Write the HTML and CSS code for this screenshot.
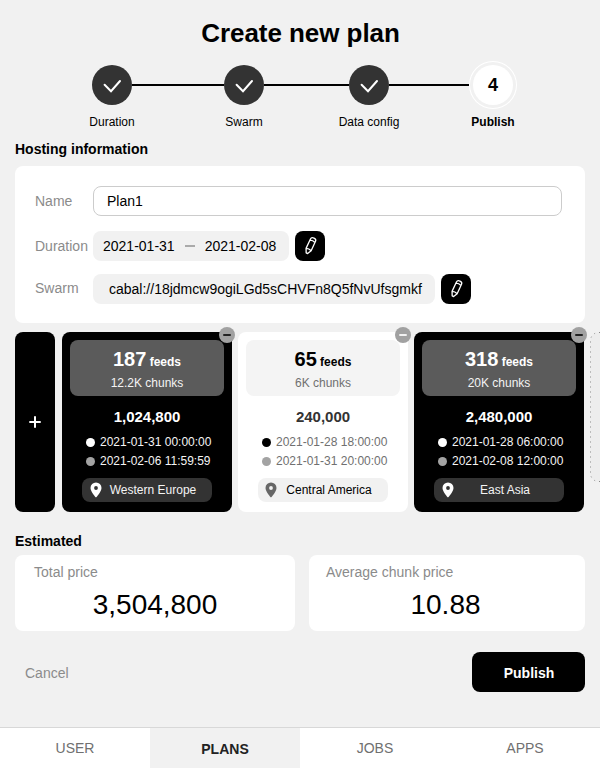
FILE: index.html
```html
<!DOCTYPE html>
<html lang="en">
<head>
<meta charset="utf-8">
<title>Create new plan</title>
<link rel="stylesheet" href="styles.css">
</head>
<body>
<svg width="0" height="0" class="sprite" aria-hidden="true">
  <symbol id="check" viewBox="0 0 40 40"><path d="M12.600 19.800 19 26.200 28 16" fill="none" stroke="#fff" stroke-width="2" stroke-linecap="round" stroke-linejoin="miter"/></symbol>
  <symbol id="pencil" viewBox="0 0 30 30"><g transform="rotate(25 15.5 14.5)" fill="none" stroke="#fff" stroke-width="1.3" stroke-linejoin="round" stroke-linecap="round"><path d="M12.700 8.600a2.800 2.300 0 0 1 5.600 0V19l-2 4h-1.600L12.700 19zM12.700 9.900q2.800-1.300 5.600 0M12.700 19q2.800-1.200 5.600 0"/></g></symbol>
  <symbol id="pin" viewBox="0 0 12 16"><path fill-rule="evenodd" d="M6 .5a5.500 5.500 0 0 0-5.500 5.500C.5 9.800 6 15.600 6 15.600S11.500 9.800 11.500 6A5.500 5.500 0 0 0 6 .5zM6 4.100a1.900 1.900 0 1 1 0 3.800 1.900 1.900 0 0 1 0-3.800z" fill="currentColor"/></symbol>
</svg>
<main>
  <h1>Create new plan</h1>
  <ol class="stepper">
    <li class="step"><span class="circle"><svg><use href="#check"/></svg></span><span class="caption">Duration</span></li>
    <li class="line l1"></li>
    <li class="step"><span class="circle"><svg><use href="#check"/></svg></span><span class="caption">Swarm</span></li>
    <li class="line l2"></li>
    <li class="step"><span class="circle"><svg><use href="#check"/></svg></span><span class="caption">Data config</span></li>
    <li class="line l3"></li>
    <li class="step current"><span class="circle">4</span><span class="caption">Publish</span></li>
  </ol>

  <h2>Hosting information</h2>
  <section class="info">
    <div class="row name"><span class="label">Name</span><div class="input">Plan1</div></div>
    <div class="row"><span class="label">Duration</span><div class="chip"><span>2021-01-31</span><i class="dash"></i><span>2021-02-08</span></div><button class="edit"><svg><use href="#pencil"/></svg></button></div>
    <div class="row swarm"><span class="label">Swarm</span><div class="chip address">cabal://18jdmcw9ogiLGd5sCHVFn8Q5fNvUfsgmkf</div><button class="edit"><svg><use href="#pencil"/></svg></button></div>
  </section>

  <section class="jobs">
    <button class="add"><svg viewBox="0 0 12 12"><path d="M6 .3v11.400M.3 6h11.400" stroke="#fff" stroke-width="2"/></svg></button>
    <article class="job dark">
      <button class="remove"></button>
      <div class="summary"><p class="feeds"><b>187</b> feeds</p><p class="chunks">12.2K chunks</p></div>
      <p class="price">1,024,800</p>
      <p class="date start">2021-01-31 00:00:00</p>
      <p class="date">2021-02-06 11:59:59</p>
      <div class="region"><svg class="pin"><use href="#pin"/></svg><span>Western Europe</span></div>
    </article>
    <article class="job">
      <button class="remove"></button>
      <div class="summary"><p class="feeds"><b>65</b> feeds</p><p class="chunks">6K chunks</p></div>
      <p class="price">240,000</p>
      <p class="date start">2021-01-28 18:00:00</p>
      <p class="date">2021-01-31 20:00:00</p>
      <div class="region"><svg class="pin"><use href="#pin"/></svg><span>Central America</span></div>
    </article>
    <article class="job dark">
      <button class="remove"></button>
      <div class="summary"><p class="feeds"><b>318</b> feeds</p><p class="chunks">20K chunks</p></div>
      <p class="price">2,480,000</p>
      <p class="date start">2021-01-28 06:00:00</p>
      <p class="date">2021-02-08 12:00:00</p>
      <div class="region"><svg class="pin"><use href="#pin"/></svg><span>East Asia</span></div>
    </article>
    <svg class="placeholder" viewBox="0 0 10 150"><path d="M10 .5H8.500a8 8 0 0 0-8 8v133a8 8 0 0 0 8 8H10"/></svg>
  </section>

  <h2 class="estimated">Estimated</h2>
  <section class="totals">
    <div class="total"><p class="label">Total price</p><p class="value">3,504,800</p></div>
    <div class="total average"><p class="label">Average chunk price</p><p class="value">10.88</p></div>
  </section>

  <div class="actions"><button class="cancel">Cancel</button><button class="publish">Publish</button></div>
</main>
<nav><a>USER</a><a class="active">PLANS</a><a>JOBS</a><a>APPS</a></nav>
</body>
</html>
```
FILE: styles.css
```css
* { box-sizing: border-box; margin: 0; padding: 0; }
body {
  width: 600px; height: 768px; overflow: hidden;
  display: flex; flex-direction: column;
  background: #f1f1f1; color: #000;
  font: 14px/20px "Liberation Sans", Arial, sans-serif;
}
button { border: 0; background: none; font: inherit; color: inherit; }
svg { display: block; }
.sprite { position: absolute; }
main { flex: 1; padding: 18px 0 0 15px; }
h1 { margin-right: 14px; font-size: 26px; line-height: 30px; text-align: center; letter-spacing: -.05px; }
h2 { font-size: 14px; line-height: 20px; }

.stepper { display: flex; list-style: none; padding-left: 77px; margin-top: 17px; height: 74px; }
.step { width: 40px; display: flex; flex-direction: column; align-items: center; }
.circle {
  flex: none; width: 40px; height: 40px; border-radius: 50%; background: #333;
  display: flex; align-items: center; justify-content: center;
}
.circle svg { width: 40px; height: 40px; }
.caption { margin-top: 9px; font-size: 12px; line-height: 16px; white-space: nowrap; }
.line { height: 2px; margin-top: 19px; background: #000; }
.l1 { width: 92px; }
.l2 { width: 85px; }
.l3 { width: 80px; }
.current { margin-left: 4px; font-weight: bold; }
.current .circle { background: #fff; font-size: 18px; box-shadow: 0 0 0 3px #f1f1f1, 0 0 0 4px #fff; }

.info { width: 570px; height: 157px; margin-top: 7px; padding: 20px; border-radius: 8px; background: #fff; }
.row { display: flex; height: 30px; margin-bottom: 13px; line-height: 30px; }
.row.name { margin-bottom: 15px; }
.label { color: #8b8b8b; }
.row .label { flex: none; width: 58px; }
.swarm .label { line-height: 28px; }
.input { width: 469px; border: 1px solid #ccc; border-radius: 8px; padding-left: 13px; line-height: 28px; }
.chip { width: 196px; padding-left: 10px; display: flex; align-items: center; background: #f1f1f1; border-radius: 8px; }
.dash { width: 10px; height: 2px; margin: 0 10px; background: #aaa; }
.address { width: 342px; padding-left: 16px; }
.edit { width: 30px; height: 30px; margin-left: 6px; border-radius: 8px; background: #000; }
.edit svg { width: 30px; height: 30px; }

.jobs { display: flex; gap: 6px; margin-top: 9px; height: 180px; }
.add {
  flex: none; width: 40px; margin-right: 1px; border-radius: 8px; background: #000;
  display: flex; align-items: center; justify-content: center;
}
.add svg { width: 12px; height: 12px; }
.job {
  position: relative; flex: none; width: 170px; padding: 8px; border-radius: 8px;
  background: #fff; color: #707070; font-size: 12px;
}
.summary { height: 56px; padding-top: 7px; border-radius: 8px; background: #f4f4f4; text-align: center; }
.feeds { color: #000; font-weight: bold; line-height: 24px; height: 24px; }
.feeds b { font-size: 20px; }
.chunks { line-height: 20px; margin-top: 2px; }
.price { margin: 11px 0 6px; font-size: 15px; line-height: 20px; font-weight: bold; text-align: center; color: #333; }
.date { display: flex; align-items: center; gap: 5px; padding-left: 16px; line-height: 19px; height: 19px; }
.date::before { content: ""; width: 9px; height: 9px; border-radius: 50%; background: #a3a3a3; }
.date.start::before { background: #000; }
.region { display: flex; align-items: center; width: 130px; height: 24px; margin: 7px 0 0 12px; border-radius: 8px; background: #f1f1f1; color: #000; }
.region span { flex: 1; text-align: center; padding-right: 7px; }
.pin { width: 12px; height: 16px; margin: 0 0 0 7px; color: #666; }
.dark { background: #000; color: #f4f4f4; }
.dark .summary { background: #5b5b5b; }
.dark .feeds, .dark .price { color: #fff; }
.dark .date.start::before { background: #fff; }
.dark .region { background: #333; color: #f4f4f4; }
.dark .region span { padding-right: 8px; }
.dark .pin { color: #fff; margin-left: 8px; }
.remove {
  position: absolute; right: -3px; top: -5px; width: 16px; height: 16px; border-radius: 50%;
  background: #a1a1a1; display: flex; align-items: center; justify-content: center;
}
.remove::before { content: ""; width: 8px; height: 2px; background: #f1f1f1; border-radius: 1px; }
.dark .remove::before { background: #222; }
.placeholder { flex: none; width: 10px; height: 150px; }
.placeholder path { fill: #ededed; stroke: #888; stroke-dasharray: 1 4; }

.estimated { margin-top: 19px; }
.totals { display: flex; gap: 14px; height: 76px; margin-top: 4px; }
.total { width: 280px; padding-top: 7px; border-radius: 8px; background: #fff; }
.total .label { padding-left: 19px; }
.average { width: 276px; }
.average .label { padding-left: 17px; }
.value { margin-top: 8px; font-size: 28px; line-height: 30px; text-align: center; }
.average .value { padding-right: 3px; }
.actions { display: flex; justify-content: space-between; align-items: center; width: 570px; margin-top: 21px; height: 40px; }
.cancel { padding: 2px 0 0 10px; color: #8b8b8b; line-height: 20px; }
.publish { width: 113px; height: 40px; padding: 2px 0 0 1px; border-radius: 8px; background: #000; color: #fff; font-weight: bold; }
nav { display: grid; grid-template-columns: repeat(4, 1fr); height: 41px; border-top: 1px solid #d8d8d8; background: #fff; }
nav a { text-align: center; line-height: 40px; color: #707070; }
nav .active { background: #f1f1f1; color: #222; font-weight: bold; line-height: 42px; height: 40px; }
```
